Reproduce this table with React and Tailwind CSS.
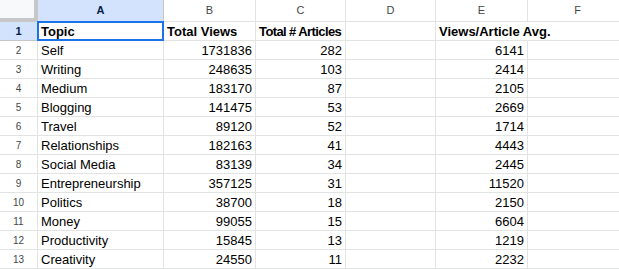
import React from "react";

const rows = [
  ["Self", 1731836, 282, 6141],
  ["Writing", 248635, 103, 2414],
  ["Medium", 183170, 87, 2105],
  ["Blogging", 141475, 53, 2669],
  ["Travel", 89120, 52, 1714],
  ["Relationships", 182163, 41, 4443],
  ["Social Media", 83139, 34, 2445],
  ["Entrepreneurship", 357125, 31, 11520],
  ["Politics", 38700, 18, 2150],
  ["Money", 99055, 15, 6604],
  ["Productivity", 15845, 13, 1219],
  ["Creativity", 24550, 11, 2232],
];

const cols = ["A", "B", "C", "D", "E", "F"];

const cell = "h-[19px] border-r border-b border-[#e2e3e3] px-[3px] leading-[19px] whitespace-nowrap overflow-hidden";
const headCell = "h-[19px] border-b border-[#e2e3e3] px-[3px] leading-[19px] whitespace-nowrap font-bold";

const App = () => {
  return (
    <div
      className="w-[619px] h-[269px] overflow-hidden bg-white text-[13px] text-black"
      style={{ fontFamily: '"Liberation Sans", Arial, sans-serif' }}
    >
      <div className="grid grid-cols-[38px_126px_92px_90px_90px_92px_100px] w-[628px]">
        {/* column headers */}
        <div className="h-[22px] bg-[#f8f9fa] border-r-4 border-b-4 border-[#c7c7c7]" />
        {cols.map((c) => (
          <div
            key={c}
            className={
              "h-[22px] flex items-center justify-center border-r border-b text-[11px] " +
              (c === "A"
                ? "bg-[#d3e3fd] border-[#c4c7c5] font-bold text-[#041e49]"
                : "bg-white border-[#e2e3e3] text-[#444746]")
            }
          >
            {c}
          </div>
        ))}

        {/* row 1 */}
        <div className="h-[19px] flex items-center justify-center bg-[#d3e3fd] border-r border-b border-[#c4c7c5] text-[11px] font-bold text-[#041e49]">
          1
        </div>
        <div className={cell + " relative font-bold overflow-visible"}>
          Topic
          <div className="absolute -left-px -top-px right-[-1px] bottom-[-1px] border-2 border-[#1a73e8]" />
        </div>
        <div className={cell + " font-bold"}>Total Views</div>
        <div className={cell + " font-bold tracking-[-0.6px]"}>Total # Articles</div>
        <div className={cell} />
        <div className={headCell + " relative z-10"}>Views/Article Avg.</div>
        <div className={cell} />

        {rows.map((r, i) => (
          <React.Fragment key={r[0]}>
            <div className="h-[19px] flex items-center justify-center bg-white border-r border-b border-[#e2e3e3] text-[10px] text-[#444746]">
              {i + 2}
            </div>
            <div className={cell}>{r[0]}</div>
            <div className={cell + " text-right"}>{r[1]}</div>
            <div className={cell + " text-right"}>{r[2]}</div>
            <div className={cell} />
            <div className={cell + " text-right"}>{r[3]}</div>
            <div className={cell} />
          </React.Fragment>
        ))}
      </div>
    </div>
  );
};

export default App;
